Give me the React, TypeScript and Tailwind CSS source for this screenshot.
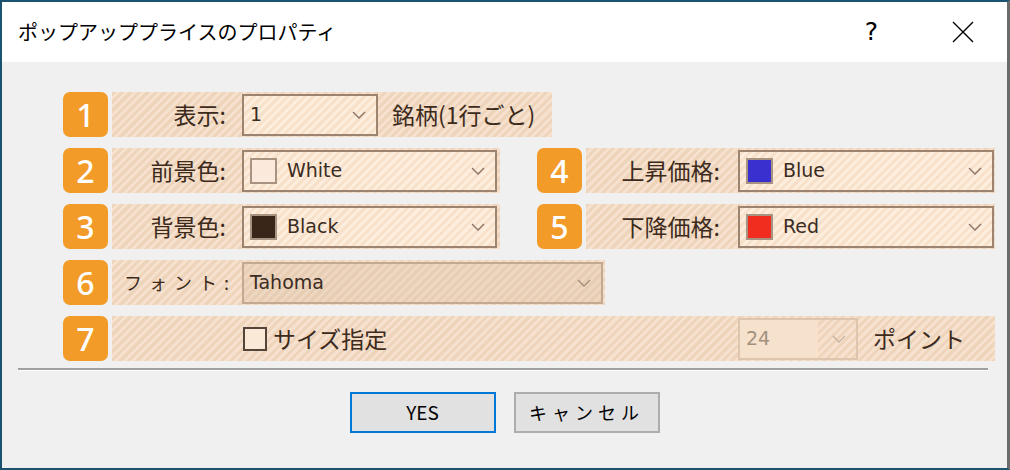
import React from "react";

const jp = { fontFamily: '"Noto Sans CJK JP", "Noto Sans", sans-serif' };
const latin = { fontFamily: '"DejaVu Sans", "Liberation Sans", sans-serif' };

const band =
  "bg-[repeating-linear-gradient(135deg,#eed4ba_0px,#eed4ba_3px,#f5e1cd_3px,#f5e1cd_6px)]";
const boxFill =
  "bg-[repeating-linear-gradient(135deg,#f8e1cb_0px,#f8e1cb_3px,#fdeddd_3px,#fdeddd_6px)]";

function Badge({ n }: { n: number }) {
  return (
    <div
      className="w-[45px] h-[45px] shrink-0 rounded-[7px] bg-[#f29b28] text-white text-[32px] font-medium flex items-center justify-center leading-none"
      style={{ fontFamily: '"Noto Sans", sans-serif' }}
    >
      {n}
    </div>
  );
}

function Chevron({ color = "#8a7262" }: { color?: string }) {
  return (
    <svg width="14" height="8" viewBox="0 0 14 8" className="shrink-0">
      <path d="M1 1 L7 7 L13 1" fill="none" stroke={color} strokeWidth="1.3" />
    </svg>
  );
}

function Combo({
  width,
  swatch,
  text,
}: {
  width: string;
  swatch?: string;
  text: string;
}) {
  return (
    <div
      className={`${width} h-[42px] border-2 border-[#9c8470] ${boxFill} flex items-center pl-[6px] pr-[10px] shrink-0`}
    >
      {swatch && (
        <div
          className="w-[27px] h-[26px] border-2 border-[#a89282] mr-[10px] shrink-0"
          style={{ backgroundColor: swatch }}
        />
      )}
      <span className="flex-1 text-[19px] text-[#3a2c22]" style={latin}>
        {text}
      </span>
      <Chevron />
    </div>
  );
}

function Label({ text, width, pr }: { text: string; width: string; pr: string }) {
  return (
    <div
      className={`${width} ${pr} shrink-0 text-right text-[23px] text-[#3c2a1c] leading-none`}
      style={jp}
    >
      {text}
    </div>
  );
}

export default function App() {
  return (
    <div className="w-[1010px] h-[470px] flex flex-col border-l-2 border-t-2 border-b-2 border-[#1b5270] border-r-[3px] border-r-[#6b6b6b] overflow-hidden">
      {/* title bar */}
      <div className="h-[60px] bg-white flex items-center shrink-0">
        <span className="pl-[16px] text-[20px] text-black" style={jp}>
          ポップアッププライスのプロパティ
        </span>
        <div className="flex-1" />
        <span className="text-[25px] text-black mr-[74px]" style={latin}>
          ?
        </span>
        <svg width="22" height="22" viewBox="0 0 22 22" className="mr-[33px]">
          <path d="M1 1 L21 21 M21 1 L1 21" stroke="#000" strokeWidth="1.4" />
        </svg>
      </div>

      {/* body */}
      <div className="flex-1 bg-[#f0f0f0] flex flex-col">
        <div className="pl-[61px] pt-[30px] flex flex-col gap-[11px]">
          {/* row 1 */}
          <div className="flex items-center gap-[4px]">
            <Badge n={1} />
            <div className={`w-[440px] h-[45px] ${band} flex items-center`}>
              <Label text="表示:" width="w-[130px]" pr="pr-[16px]" />
              <Combo width="w-[136px]" text="1" />
              <span className="ml-[14px] text-[23px] text-[#3c2a1c]" style={jp}>
                銘柄(1行ごと)
              </span>
            </div>
          </div>

          {/* row 2 / 4 */}
          <div className="flex items-center">
            <div className="flex items-center gap-[4px]">
              <Badge n={2} />
              <div className={`w-[388px] h-[45px] ${band} flex items-center`}>
                <Label text="前景色:" width="w-[130px]" pr="pr-[16px]" />
                <Combo width="w-[255px]" swatch="#fbeadb" text="White" />
              </div>
            </div>
            <div className="ml-[37px] flex items-center gap-[4px]">
              <Badge n={4} />
              <div className={`w-[409px] h-[45px] ${band} flex items-center`}>
                <Label text="上昇価格:" width="w-[152px]" pr="pr-[18px]" />
                <Combo width="w-[256px]" swatch="#3a2fcf" text="Blue" />
              </div>
            </div>
          </div>

          {/* row 3 / 5 */}
          <div className="flex items-center">
            <div className="flex items-center gap-[4px]">
              <Badge n={3} />
              <div className={`w-[388px] h-[45px] ${band} flex items-center`}>
                <Label text="背景色:" width="w-[130px]" pr="pr-[16px]" />
                <Combo width="w-[255px]" swatch="#3a2618" text="Black" />
              </div>
            </div>
            <div className="ml-[37px] flex items-center gap-[4px]">
              <Badge n={5} />
              <div className={`w-[409px] h-[45px] ${band} flex items-center`}>
                <Label text="下降価格:" width="w-[152px]" pr="pr-[18px]" />
                <Combo width="w-[256px]" swatch="#f02d1e" text="Red" />
              </div>
            </div>
          </div>

          {/* row 6 */}
          <div className="flex items-center gap-[4px]">
            <Badge n={6} />
            <div className={`w-[493px] h-[45px] ${band} flex items-center`}>
              <span
                className="w-[130px] pl-[12px] text-[18px] tracking-[7px] text-[#3c2a1c] shrink-0"
                style={jp}
              >
                フォント:
              </span>
              <div className="w-[361px] h-[42px] border-2 border-[#c2a990] bg-[repeating-linear-gradient(135deg,#e6cdb4_0px,#e6cdb4_3px,#eed7c1_3px,#eed7c1_6px)] flex items-center pl-[6px] pr-[10px]">
                <span className="flex-1 text-[19px] text-[#3a2c22]" style={latin}>
                  Tahoma
                </span>
                <Chevron color="#a08a78" />
              </div>
            </div>
          </div>

          {/* row 7 */}
          <div className="flex items-center gap-[4px]">
            <Badge n={7} />
            <div className={`w-[883px] h-[45px] ${band} flex items-center`}>
              <div className="ml-[131px] w-[24px] h-[24px] border-2 border-[#54443a] bg-[#fbe9d8] shrink-0" />
              <span className="ml-[6px] text-[23px] text-[#3c2a1c]" style={jp}>
                サイズ指定
              </span>
              <div className="flex-1" />
              <div className="w-[120px] h-[42px] border-2 border-[#dec6ae] flex items-center pr-[10px] shrink-0">
                <div className="w-[78px] h-full bg-[#f6e1cd] flex items-center pl-[6px]">
                  <span className="text-[19px] text-[#a3907f]" style={latin}>
                    24
                  </span>
                </div>
                <div className="flex-1" />
                <Chevron color="#c5b1a0" />
              </div>
              <span className="ml-[15px] mr-[30px] text-[23px] text-[#3c2a1c]" style={jp}>
                ポイント
              </span>
            </div>
          </div>
        </div>

        {/* separator */}
        <div className="ml-[16px] mt-[7px] w-[970px] h-[2px] bg-[#a0a0a0] border-b border-white box-content" />

        {/* buttons */}
        <div className="flex justify-center gap-[18px] mt-[21px]">
          <button
            className="w-[146px] h-[41px] border-2 border-[#0078d7] bg-[#e1e1e1] text-[19px] text-black"
            style={jp}
          >
            YES
          </button>
          <button
            className="w-[146px] h-[41px] border-2 border-[#adadad] bg-[#e1e1e1] text-[18px] tracking-[5px] text-black"
            style={jp}
          >
            キャンセル
          </button>
        </div>
      </div>
    </div>
  );
}
